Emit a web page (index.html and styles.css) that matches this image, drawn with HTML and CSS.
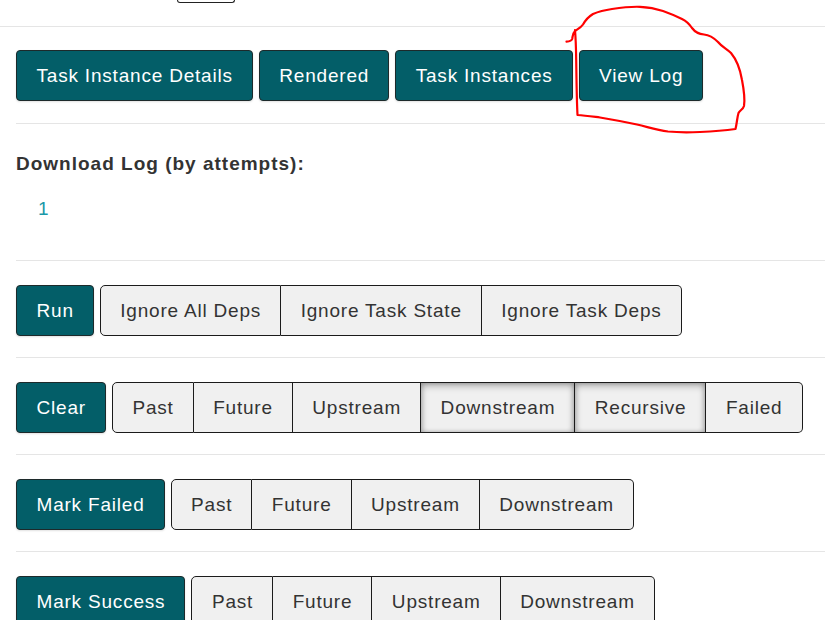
FILE: index.html
```html
<!DOCTYPE html>
<html>
<head>
<meta charset="utf-8">
<link rel="stylesheet" href="styles.css">
</head>
<body>
<div class="page">
  <div class="topstrip"><div class="stub"></div></div>
  <div class="content">
    <div class="section first">
      <div class="row">
        <button class="btn primary">Task Instance Details</button>
        <button class="btn primary">Rendered</button>
        <button class="btn primary">Task Instances</button>
        <button class="btn primary">View Log</button>
      </div>
    </div>
    <div class="section download">
      <div class="dl-title">Download Log (by attempts):</div>
      <ul class="attempts"><li><a href="#">1</a></li></ul>
    </div>
    <div class="section">
      <div class="row">
        <button class="btn primary">Run</button>
        <div class="group">
          <button class="btn opt">Ignore All Deps</button>
          <button class="btn opt">Ignore Task State</button>
          <button class="btn opt">Ignore Task Deps</button>
        </div>
      </div>
    </div>
    <div class="section">
      <div class="row">
        <button class="btn primary">Clear</button>
        <div class="group">
          <button class="btn opt">Past</button>
          <button class="btn opt">Future</button>
          <button class="btn opt">Upstream</button>
          <button class="btn opt active">Downstream</button>
          <button class="btn opt active">Recursive</button>
          <button class="btn opt">Failed</button>
        </div>
      </div>
    </div>
    <div class="section">
      <div class="row">
        <button class="btn primary">Mark Failed</button>
        <div class="group">
          <button class="btn opt">Past</button>
          <button class="btn opt">Future</button>
          <button class="btn opt">Upstream</button>
          <button class="btn opt">Downstream</button>
        </div>
      </div>
    </div>
    <div class="section last">
      <div class="row">
        <button class="btn primary">Mark Success</button>
        <div class="group">
          <button class="btn opt">Past</button>
          <button class="btn opt">Future</button>
          <button class="btn opt">Upstream</button>
          <button class="btn opt">Downstream</button>
        </div>
      </div>
    </div>
  </div>
  <svg class="annotation" width="825" height="140" viewBox="0 0 825 140">
    <path d="M566.5 41.7 C569 41.5 571.5 41.2 572.2 39 C572.8 36 572.5 33.5 575 31 C578 29 581 27.5 583 24.5 C585 21 587 17.5 593 14 C600 11 605 10 612 9 C625 7 632 6.5 640 6.8 C650 7.3 657 9 663 11 C670 13.5 676 16 682 19 C688 22 690 25 692 28 C695 32 698 34 704 34.5 C710 35 714 38 718 42 C722 47 727 49 731 53 C736 59 740 68 742 80 C744.5 93 745 100 744 106 C743 109.5 740 110 738.5 113 C737 118 737 123 735.5 129 C725 130.5 712 131.5 700 132 C688 132.5 678 132.5 668 131.5 C656 130 648 127 637 124.5 C625 122 612 119.5 600 117.5 C592 116.5 585 115.5 577.5 115 C576.7 100 576.5 80 576.2 60 C576 45 575.5 36 575 30" fill="none" stroke="#ff0000" stroke-width="2.2" stroke-linecap="round" stroke-linejoin="round"/>
  </svg>
</div>
</body>
</html>
```
FILE: styles.css
```css
html, body {
  margin: 0;
  padding: 0;
  background: #ffffff;
}
body {
  font-family: "Liberation Sans", Arial, sans-serif;
  color: #333333;
}
.page {
  position: relative;
  width: 825px;
  height: 620px;
  overflow: hidden;
}
.topstrip {
  height: 26px;
  border-bottom: 1px solid #e5e5e5;
}
.stub {
  margin-left: 177px;
  width: 56px;
  height: 2px;
  border: 1px solid #222222;
  border-top: none;
  border-radius: 0 0 5px 5px;
}
.content {
  padding-left: 16px;
}
.section {
  padding: 24px 0 21px 0;
  border-bottom: 1px solid #e5e5e5;
}
.section.first {
  padding-top: 23px;
  padding-bottom: 22px;
}
.section.last {
  border-bottom: none;
}
.row {
  display: flex;
  align-items: flex-start;
  gap: 6px;
}
.btn {
  font-family: "Liberation Sans", Arial, sans-serif;
  font-size: 19px;
  letter-spacing: 0.8px;
  line-height: 27px;
  padding: 11px 19px 11px 19.5px;
  margin: 0;
  border: 1px solid #1b1b1b;
  border-radius: 4px;
  cursor: pointer;
  white-space: nowrap;
}
.btn.primary {
  background: #035e68;
  color: #ffffff;
  border-color: #1d2a2b;
  box-shadow: 0 1px 2px rgba(0, 0, 0, 0.12);
}
.group {
  display: flex;
}
.btn.opt {
  background: #f0f0f0;
  color: #333333;
  border-radius: 0;
  border-left-width: 0;
}
.btn.opt:first-child {
  border-left-width: 1px;
  border-radius: 5px 0 0 5px;
}
.btn.opt:last-child {
  border-radius: 0 5px 5px 0;
}
.btn.opt.active {
  box-shadow: inset 0 3px 7px rgba(0, 0, 0, 0.28), inset 2px 0 4px rgba(0, 0, 0, 0.12), inset -2px 0 4px rgba(0, 0, 0, 0.12);
}
.download {
  padding-top: 27px;
  padding-bottom: 38px;
}
.dl-title {
  font-weight: bold;
  font-size: 19px;
  letter-spacing: 1px;
  line-height: 26px;
}
.attempts {
  list-style: none;
  margin: 19px 0 0 0;
  padding: 0 0 0 22px;
  font-size: 19px;
  line-height: 26px;
}
.attempts a {
  color: #1a98a8;
  text-decoration: none;
}
.annotation {
  position: absolute;
  left: 0;
  top: 0;
  pointer-events: none;
}
```
